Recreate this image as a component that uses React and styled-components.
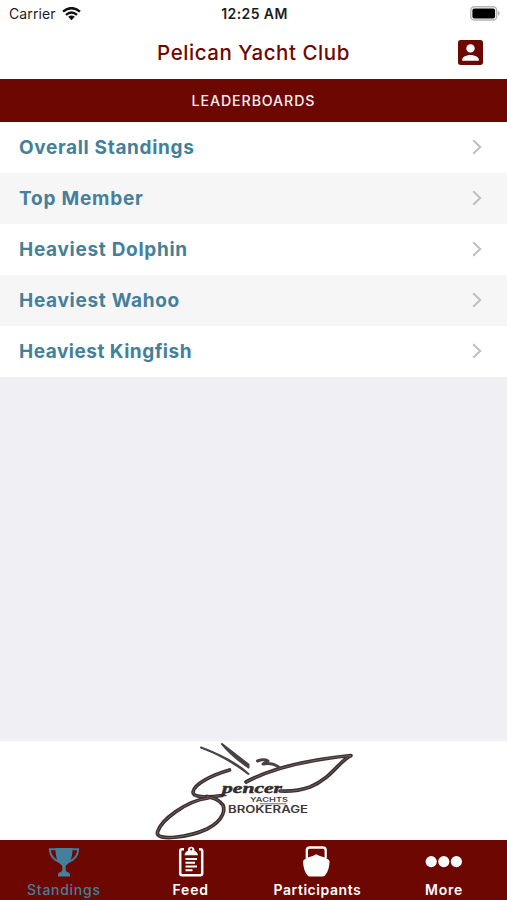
import React from 'react'
// to style the page
import styled, { createGlobalStyle } from 'styled-components'

const maroon = '#6d0702'
const blue = '#447f9b'

const GlobalStyle = createGlobalStyle`
    body {
        margin: 0;
        background: #efeff4;
        font-family: Inter, 'Open Sans', sans-serif;
    }

    * {
        box-sizing: border-box;
    }
`

const StyledApp = styled.div`
    display: flex;
    flex-direction: column;
    width: 100%;
    height: 900px;
    overflow: hidden;
    background: #efeff4;
`

const StatusBar = styled.div`
    display: grid;
    grid-template-columns: 1fr auto 1fr;
    align-items: center;
    height: 27px;
    padding: 0 7px 0 9px;
    background: #fff;
    color: #1c1c1c;
    font-size: 14px;
`

const Carrier = styled.div`
    display: flex;
    align-items: center;
    gap: 6px;
    letter-spacing: 0.1px;
`

const Clock = styled.div`
    font-size: 14px;
    font-weight: 600;
    letter-spacing: 0.4px;
`

const Battery = styled.svg`
    justify-self: end;
`

const Header = styled.header`
    display: grid;
    grid-template-columns: 49px 1fr 49px;
    align-items: center;
    height: 52px;
    padding-bottom: 2px;
    background: #fff;
    color: ${maroon};

    h1 {
        margin: 0;
        text-align: center;
        font-size: 20.5px;
        font-weight: 500;
        letter-spacing: 0.55px;
    }
`

const Banner = styled.h2`
    display: flex;
    align-items: center;
    justify-content: center;
    height: 43px;
    margin: 0;
    background: ${maroon};
    color: #f7eeed;
    font-size: 14.2px;
    font-weight: 500;
    letter-spacing: 0.9px;
`

const BoardList = styled.ul`
    margin: 0;
    padding: 0;
    list-style: none;
`

const BoardRow = styled.li`
    display: flex;
    align-items: center;
    justify-content: space-between;
    height: 51px;
    padding: 0 25px 1px 19px;
    background: ${props => (props.$shaded ? '#f6f6f6' : '#fff')};
    color: ${blue};
    font-size: 19px;
    font-weight: 700;
`

const BoardName = styled.span`
    padding-top: 1px;
    letter-spacing: ${props => props.$spacing}px;
`

const Sponsor = styled.div`
    display: flex;
    justify-content: center;
    height: 99px;
    margin-top: auto;
    padding-left: 3px;
    background: #fff;
`

const TabBar = styled.nav`
    display: grid;
    grid-template-columns: repeat(4, 1fr);
    height: 60px;
    background: ${maroon};
`

const Tab = styled.div`
    display: flex;
    flex-direction: column;
    align-items: center;
    padding: 5px 0 0 1px;
    color: ${props => (props.$active ? blue : '#fff')};
    font-size: 14px;
    font-weight: ${props => (props.$active ? 500 : 600)};
    line-height: 18px;
    letter-spacing: ${props => props.$spacing}px;

    svg {
        margin-bottom: 4px;
    }
`

const boards = [
    { name: 'Overall Standings', spacing: 0.66 },
    { name: 'Top Member', spacing: 0.78 },
    { name: 'Heaviest Dolphin', spacing: 0.7 },
    { name: 'Heaviest Wahoo', spacing: 0.7 },
    { name: 'Heaviest Kingfish', spacing: 0.5 },
]

function WifiIcon() {
    return (
        <svg width='19' height='14' viewBox='0 0 19 14' fill='none' stroke='#111' strokeWidth='2.5'>
            <path d='M1 4.6Q9.5 -2.3 18 4.6' />
            <path d='M4 7.9Q9.5 3.2 15 7.9' />
            <path d='M6.2 9.8Q9.5 7.2 12.8 9.8L9.5 13.2Z' fill='#111' stroke='none' />
        </svg>
    )
}

function BatteryIcon() {
    return (
        <Battery width='30' height='15' viewBox='0 0 30 15'>
            <rect x='0.8' y='0.8' width='25.9' height='13.2' rx='3.6' fill='#fff' stroke='#b5b5b5' strokeWidth='1.4' />
            <rect x='2.4' y='2.4' width='22.7' height='10' rx='2' fill='#000' />
            <path d='M28 5.1Q29.8 6 29.8 7.4T28 9.7Z' fill='#b5b5b5' />
        </Battery>
    )
}

function AccountIcon() {
    return (
        <svg width='25' height='25' viewBox='0 0 25 25'>
            <rect width='25' height='25' rx='2.7' fill={maroon} />
            <circle cx='12.5' cy='8.4' r='4.2' fill='#fff' />
            <path d='M4.2 20.8V19.4C4.2 16.5 9.7 15 12.5 15S20.8 16.5 20.8 19.4V20.8Z' fill='#fff' />
        </svg>
    )
}

function Chevron() {
    return (
        <svg width='10' height='16' viewBox='0 0 10 16' fill='none' stroke='#bfbfc1' strokeWidth='2'>
            <path d='M1.2 1.3L8.2 8L1.2 14.7' />
        </svg>
    )
}

function TrophyIcon() {
    return (
        <svg width='32' height='32' viewBox='0 0 32 32' fill='currentColor'>
            <path d='M7.5 3H24.5C24.5 12 23 17 17.7 20.8V25.5C18.2 27.2 22 27.5 22 29V31.5H10V29C10 27.5 13.8 27.2 14.3 25.5V20.8C9 17 7.5 12 7.5 3Z' />
            <path d='M8 4.3H1.8C2 11 5.2 14.6 11.6 17M24 4.3H30.2C30 11 26.8 14.6 20.4 17' fill='none' stroke='currentColor' strokeWidth='1.9' />
        </svg>
    )
}

function ClipboardIcon() {
    return (
        <svg width='32' height='32' viewBox='0 0 32 32'>
            <rect x='5.2' y='4.3' width='22' height='26' rx='2' fill='none' stroke='currentColor' strokeWidth='2.5' />
            <path d='M9 2.5H24V9H9Z' fill={maroon} />
            <path d='M9.5 10.3C9.7 7.4 11.6 6.5 13 5.8C12 0.5 20.4 0.5 19.4 5.8C20.8 6.5 22.8 7.4 23 10.3Z' fill='currentColor' />
            <circle cx='16.2' cy='4.4' r='1.1' fill={maroon} />
            <path d='M10.5 14H22M10.5 17.8H20M10.5 21.5H22M10.5 25.2H17.5' fill='none' stroke='currentColor' strokeWidth='1.9' />
        </svg>
    )
}

function BoatIcon() {
    return (
        <svg width='32' height='32' viewBox='0 0 32 32'>
            <path d='M5.8 13V5.2Q5.8 2.5 8.7 2.5H21.8Q24.7 2.5 24.7 5.2V13' fill='none' stroke='currentColor' strokeWidth='2.3' />
            <path d='M2 16.5Q2.6 14 7.5 12.2Q12 11.4 15.3 9.2Q18.6 11.4 23 12.2Q28 14 28.6 16.5C28.2 22.5 27 27 24.2 30.2Q23.2 31.4 21.5 31.4H9.1Q7.4 31.4 6.4 30.2C3.6 27 2.4 22.5 2 16.5Z' fill='currentColor' />
        </svg>
    )
}

function MoreIcon() {
    return (
        <svg width='38' height='32' viewBox='0 0 38 32' fill='currentColor'>
            <circle cx='6.2' cy='16.6' r='5.6' />
            <circle cx='18.8' cy='16.6' r='5.6' />
            <circle cx='31.4' cy='16.6' r='5.6' />
        </svg>
    )
}

// signature and boat hull, drawn as one pen line
const penStrokes = [
    'M229.5 770C212 775 194 784 193 792C192.5 797 205 798 222 795.5',
    'M208 798C186 801 161 820 157.5 832C155 842 190 837 207 829C223 821 228 808 220 802C216 798 211 798 207 796.5',
    'M246 782C274 767 315 759 351 755.5C339 761 332 778 310 787C299 791 290 791.5 280 791',
]

function SponsorLogo() {
    return (
        <svg width='210' height='99' viewBox='150 741 210 99' fill='none' strokeLinecap='round' strokeLinejoin='round'>
            {penStrokes.map(d => (
                <g key={d}>
                    <path d={d} stroke='#3a3032' strokeWidth='3.7' />
                    <path d={d} stroke='#85686b' strokeWidth='0.8' />
                </g>
            ))}
            <path d='M201 747.5Q225 756 248.5 774Q234 760 201 747.5ZM222 744L248.5 764.5V767.5Q232 756 222 744Z' fill='#4a4143' stroke='#4a4143' strokeWidth='2' />
            <path d='M257.5 761Q264 758.5 268 761L263 764Q272 762 278.5 767' stroke='#4a4143' strokeWidth='3' />
            <text x='222' y='792.5' textLength='60' lengthAdjust='spacingAndGlyphs' fill='#332b2d' stroke='#332b2d' strokeWidth='0.5' fontFamily='Liberation Serif, serif' fontSize='14.5' fontStyle='italic' fontWeight='700'>pencer</text>
            <text x='250' y='802' textLength='38' lengthAdjust='spacingAndGlyphs' fill='#4a4043' fontFamily='Inter, sans-serif' fontSize='6' fontWeight='600'>YACHTS</text>
            <path d='M260 803.8H286' stroke='#4a4043' strokeWidth='0.8' />
            <text x='228' y='812.5' textLength='80' lengthAdjust='spacingAndGlyphs' fill='#403638' fontFamily='Inter, sans-serif' fontSize='10' fontWeight='600'>BROKERAGE</text>
        </svg>
    )
}

export default function App() {
    return (
        <StyledApp>
            <GlobalStyle />
            <StatusBar>
                <Carrier>Carrier <WifiIcon /></Carrier>
                <Clock>12:25 AM</Clock>
                <BatteryIcon />
            </StatusBar>

            <Header>
                <span />
                <h1>Pelican Yacht Club</h1>
                <AccountIcon />
            </Header>
            <Banner>LEADERBOARDS</Banner>

            {/* LEADERBOARD LINKS */}
            <BoardList>
                {boards.map((board, i) => (
                    <BoardRow key={board.name} $shaded={i % 2 === 1}>
                        <BoardName $spacing={board.spacing}>{board.name}</BoardName>
                        <Chevron />
                    </BoardRow>
                ))}
            </BoardList>

            <Sponsor>
                <SponsorLogo />
            </Sponsor>

            {/* BOTTOM TABS */}
            <TabBar>
                <Tab $active $spacing={0.72}><TrophyIcon />Standings</Tab>
                <Tab $spacing={0.8}><ClipboardIcon />Feed</Tab>
                <Tab $spacing={0.55}><BoatIcon />Participants</Tab>
                <Tab $spacing={0.8}><MoreIcon />More</Tab>
            </TabBar>
        </StyledApp>
    )
}
